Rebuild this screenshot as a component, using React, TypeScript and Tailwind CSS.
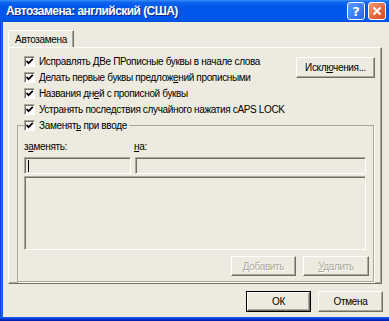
import React from "react";

const body = "font-['Liberation_Sans',Arial,sans-serif] text-[10px] tracking-[-0.35px] leading-[13px] text-black";

function Check() {
  return (
    <span className="w-[11px] h-[11px] shrink-0 bg-white border-t border-l border-t-[#ACA899] border-l-[#ACA899] border-r border-b border-r-white border-b-white shadow-[inset_1px_1px_0_#716F64] flex items-center justify-center">
      <svg width="9" height="9" viewBox="0 0 9 9">
        <path d="M1.5 4 L3.5 6.2 L7.8 1.8" fill="none" stroke="#000" strokeWidth="1.8" />
      </svg>
    </span>
  );
}

function Row({ children }: { children: React.ReactNode }) {
  return (
    <div className="h-[16px] flex items-center gap-[4px]">
      <Check />
      <span className="whitespace-nowrap">{children}</span>
    </div>
  );
}

function Btn({ children, w, disabled, def }: { children: React.ReactNode; w: string; disabled?: boolean; def?: boolean }) {
  return (
    <div className={`${w} ${def ? "border border-black" : ""} shrink-0`}>
      <div
        className={`h-full flex items-center justify-center border-t border-l border-t-white border-l-white border-r border-b border-r-[#716F64] border-b-[#716F64] shadow-[inset_-1px_-1px_0_#ACA899] ${
          disabled ? "text-[#ACA899] [text-shadow:1px_1px_0_#fff]" : ""
        }`}
      >
        <span className="whitespace-nowrap">{children}</span>
      </div>
    </div>
  );
}

export default function App() {
  return (
    <div className="w-[389px] h-[321px] overflow-hidden flex flex-col bg-[#0055EA]">
      {/* title bar */}
      <div className="h-[22px] shrink-0 flex items-center bg-[linear-gradient(to_bottom,#3A8CFF_0%,#0A62EE_12%,#0055E8_40%,#0058EE_80%,#0050E0_100%)]">
        <span className="pl-[6px] font-['Liberation_Sans',Arial,sans-serif] font-bold text-[12px] tracking-[-0.55px] text-white [text-shadow:1px_1px_0_#0A2A8A] whitespace-nowrap">
          Автозамена: английский (США)
        </span>
        <div className="ml-auto mr-[3px] flex gap-[3px] items-center">
          <div className="w-[18px] h-[18px] rounded-[3px] border border-white bg-[linear-gradient(135deg,#5C9DFF,#1F63EF)] flex items-center justify-center">
            <span className="font-['DejaVu_Sans',sans-serif] font-bold text-[13px] leading-none text-white">?</span>
          </div>
          <div className="w-[18px] h-[18px] rounded-[3px] border border-white bg-[linear-gradient(135deg,#F09A78,#D8451C)] flex items-center justify-center">
            <svg width="10" height="10" viewBox="0 0 10 10">
              <path d="M1.5 1.5 L8.5 8.5 M8.5 1.5 L1.5 8.5" stroke="#fff" strokeWidth="2" />
            </svg>
          </div>
        </div>
      </div>
      {/* body */}
      <div className="flex-1 flex min-h-0">
        <div className="w-[3px] shrink-0 bg-[linear-gradient(to_right,#0831D9,#166AEE,#0055EA)]" />
        <div className={`flex-1 bg-[#EDEBDF] flex flex-col ${body}`}>
          <div className="pt-[8px] pl-[5px] flex">
            <div className="w-[66px] h-[17px] border-t border-l border-white border-r border-r-[#716F64] shadow-[inset_-1px_0_0_#ACA899] flex items-center justify-center">
              Автозамена
            </div>
          </div>
          {/* panel */}
          <div className="ml-[5px] w-[374px] h-[237px] border-t border-l border-white border-r border-b border-r-[#716F64] border-b-[#716F64] shadow-[inset_-1px_-1px_0_#ACA899] flex flex-col">
            <div className="flex pt-[5px]">
              <div className="pl-[15px] flex-1 flex flex-col">
                <Row>Исправлять ДВе ПРописные буквы в начале слова</Row>
                <Row>Делать первые буквы предлож<u>е</u>ний прописными</Row>
                <Row>Названия дн<u>е</u>й с прописной буквы</Row>
                <Row>Устранять после<u>д</u>ствия случайного нажатия cAPS LOCK</Row>
              </div>
              <div className="mr-[6px] mt-[4px]">
                <div className="h-[21px] flex">
                  <Btn w="w-[79px]">Искл<u>ю</u>чения...</Btn>
                </div>
              </div>
            </div>
            <fieldset className="ml-[8px] w-[357px] border border-[#ACA899] shadow-[1px_1px_0_#fff] pb-[5px]">
              <legend className="ml-[6px] pr-[2px]">
                <Row>Заменят<u>ь</u> при вводе</Row>
              </legend>
              <div className="flex mt-[7px] pl-[6px] h-[13px]">
                <span className="w-[110px]">з<u>а</u>менять:</span>
                <span><u>н</u>а:</span>
              </div>
              <div className="flex gap-[4px] pl-[6px] mt-[4px]">
                <div className="w-[107px] h-[17px] border-t border-l border-[#ACA899] shadow-[inset_1px_1px_0_#716F64] border-r border-b border-r-white border-b-white flex items-center pl-[3px]">
                  <span className="w-px h-[12px] bg-black" />
                </div>
                <div className="w-[231px] h-[17px] border-t border-l border-[#ACA899] shadow-[inset_1px_1px_0_#716F64] border-r border-b border-r-white border-b-white" />
              </div>
              <div className="ml-[6px] mt-[2px] w-[342px] h-[74px] border-t border-l border-[#ACA899] shadow-[inset_1px_1px_0_#716F64] border-r border-b border-r-white border-b-white" />
              <div className="flex justify-end gap-[7px] mr-[4px] mt-[6px] h-[20px]">
                <Btn w="w-[65px]" disabled><u>Д</u>обавить</Btn>
                <Btn w="w-[66px]" disabled><u>У</u>далить</Btn>
              </div>
            </fieldset>
          </div>
          <div className="flex justify-end gap-[7px] mr-[6px] mt-[7px] h-[21px]">
            <Btn w="w-[65px]" def>ОК</Btn>
            <Btn w="w-[65px]">Отмена</Btn>
          </div>
        </div>
      </div>
      <div className="h-[4px] shrink-0 bg-[linear-gradient(to_bottom,#166AEE,#0831D9,#001EA0)]" />
    </div>
  );
}
